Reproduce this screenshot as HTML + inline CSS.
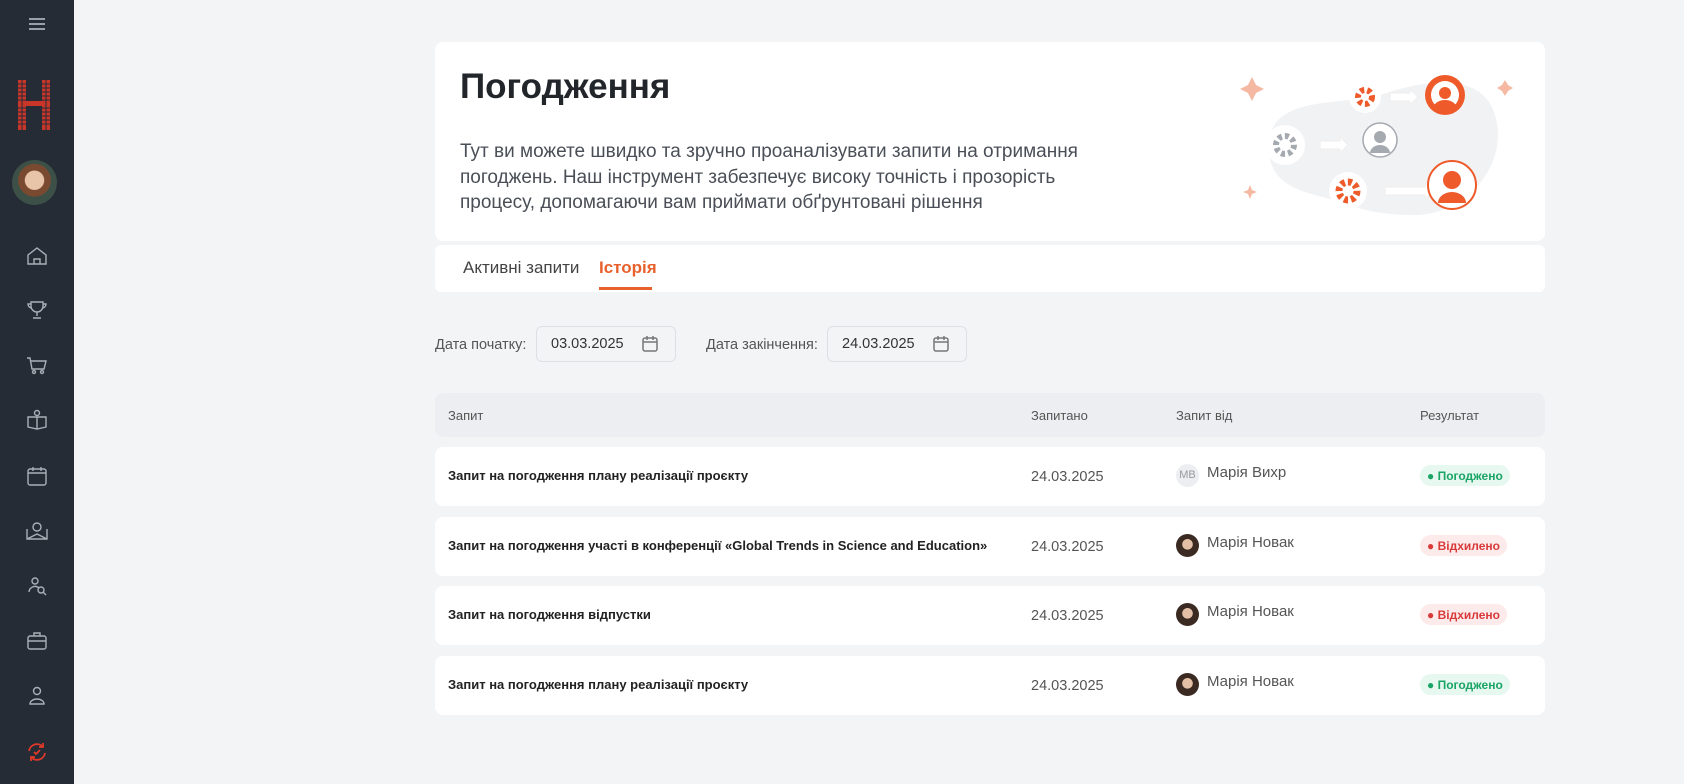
<!DOCTYPE html>
<html><head><meta charset="utf-8"><style>
*{box-sizing:border-box;margin:0;padding:0}
body{width:1684px;height:784px;background:#f3f4f6;font-family:"Liberation Sans",sans-serif;position:relative;overflow:hidden;color:#222}
.sb{position:absolute;left:0;top:0;width:74px;height:784px;background:#262c35}
.ic{position:absolute;left:23px;width:28px;height:28px}
.card{position:absolute;left:435px;top:42px;width:1110px;height:199px;background:#fff;border-radius:8px}
h1{position:absolute;left:460px;top:67px;font-size:35px;font-weight:bold;color:#22262b}
.desc{position:absolute;left:460px;top:139px;width:640px;font-size:19px;line-height:25.5px;color:#4a4f57}
.tabs{position:absolute;left:435px;top:245px;width:1110px;height:47px;background:#fff;border-radius:6px}
.tab{position:absolute;top:13px;font-size:17px;color:#444}
.lab{position:absolute;top:337px;font-size:14.5px;color:#555}
.date{position:absolute;top:326px;width:140px;height:36px;border:1px solid #dde0e4;border-radius:6px;font-size:14.5px;color:#333;padding:9px 0 0 14px}
.date svg{position:absolute;right:16px;top:8px}
.th{position:absolute;left:435px;top:393px;width:1110px;height:44px;background:#eceef1;border-radius:8px;font-size:13px;color:#555}
.th span,.row span{position:absolute}
.row{position:absolute;left:435px;width:1110px;height:59px;background:#fff;border-radius:8px;font-size:13px}
.t{left:13px;top:21px;font-weight:bold;color:#222}
.d{left:596px;top:22px;color:#555;font-size:14.5px}
.av{left:741px;top:17px;width:23px;height:23px;border-radius:50%;background:#6b5346;overflow:hidden}
.n{left:772px;top:17px;color:#555;font-size:15px}
.b{left:985px;top:18px;height:21px;border-radius:11px;font-size:12px;font-weight:bold;padding:4px 7px 0 7px}
.ok{background:#e6f8ef;color:#1aa466}.no{background:#fdeaea;color:#d83a3a}
</style></head><body>
<div class="sb">
<svg class="ic" style="top:10px" viewBox="0 0 28 28"><path d="M6 9h16M6 14h16M6 19h16" stroke="#aab0b8" stroke-width="1.8"/></svg>
<svg style="position:absolute;left:16px;top:78px" width="36" height="54" viewBox="0 0 36 54"><g fill="#c8362a"><rect x="2" y="2" width="8" height="50"/><rect x="26" y="2" width="8" height="50"/><rect x="10" y="23" width="16" height="5"/></g><g stroke="#262c35" stroke-width="1"><path d="M2 6h32M2 10h32M2 14h32M2 18h32M2 22h32M2 30h32M2 34h32M2 38h32M2 42h32M2 46h32M6 2v50M30 2v50"/></g></svg>
<div style="position:absolute;left:12px;top:160px;width:45px;height:45px;border-radius:50%;background:radial-gradient(circle at 50% 45%,#e8c4a8 0 28%,#7a4a30 30% 48%,#3c5048 50%);"></div>
<svg class="ic" style="top:242px" viewBox="0 0 28 28" fill="none" stroke="#aab0b8" stroke-width="1.4"><path d="M5 13l9-7 9 7v9H5zM11 22v-5h6v5"/></svg>
<svg class="ic" style="top:296px" viewBox="0 0 28 28" fill="none" stroke="#aab0b8" stroke-width="1.4"><path d="M8 6h12v4a6 6 0 01-12 0zM8 8H5a4 4 0 004 4M20 8h3a4 4 0 01-4 4M14 16v4M10 22h8"/></svg>
<svg class="ic" style="top:351px" viewBox="0 0 28 28" fill="none" stroke="#aab0b8" stroke-width="1.4"><path d="M4 7h3l2 11h12l2-8H8"/><circle cx="11" cy="21" r="1.5"/><circle cx="19" cy="21" r="1.5"/></svg>
<svg class="ic" style="top:406px" viewBox="0 0 28 28" fill="none" stroke="#aab0b8" stroke-width="1.4"><circle cx="14" cy="7" r="2.5"/><path d="M5 11h18v10l-9 2-9-2zM14 11v12"/></svg>
<svg class="ic" style="top:462px" viewBox="0 0 28 28" fill="none" stroke="#aab0b8" stroke-width="1.4"><rect x="5" y="7" width="18" height="16" rx="2"/><path d="M10 5v4M18 5v4M5 11h18"/></svg>
<svg class="ic" style="top:517px" viewBox="0 0 28 28" fill="none" stroke="#aab0b8" stroke-width="1.4"><path d="M4 12v10h20V12M4 22l10-5 10 5"/><circle cx="14" cy="10" r="4"/></svg>
<svg class="ic" style="top:572px" viewBox="0 0 28 28" fill="none" stroke="#aab0b8" stroke-width="1.4"><circle cx="12" cy="9" r="3"/><path d="M6 20a6 6 0 0110-4"/><circle cx="18" cy="18" r="3"/><path d="M20 20l3 3"/></svg>
<svg class="ic" style="top:627px" viewBox="0 0 28 28" fill="none" stroke="#aab0b8" stroke-width="1.4"><rect x="5" y="9" width="18" height="13" rx="2"/><path d="M11 9V6h6v3M5 14h18"/></svg>
<svg class="ic" style="top:682px" viewBox="0 0 28 28" fill="none" stroke="#aab0b8" stroke-width="1.4"><circle cx="14" cy="9" r="3.5"/><path d="M7 22a7 5 0 0114 0z"/></svg>
<svg class="ic" style="top:738px" viewBox="0 0 28 28" fill="none" stroke="#e0392a" stroke-width="1.8"><path d="M6 13a8 8 0 0114-4M22 15a8 8 0 01-14 4M20 5v4h-4M8 23v-4h4M11 14l2 2 4-4"/></svg>
</div>
<div class="card"></div>
<h1>Погодження</h1>
<div class="desc">Тут ви можете швидко та зручно проаналізувати запити на отримання погоджень. Наш інструмент забезпечує високу точність і прозорість процесу, допомагаючи вам приймати обґрунтовані рішення</div>
<svg style="position:absolute;left:1240px;top:65px" width="280" height="160" viewBox="0 0 280 160">
<path d="M30 70c10-40 80-30 110-40s100-30 115 20-30 100-80 100-60-10-100-20-50-30-45-60z" fill="#f1f2f4"/>
<path d="M12 12l4 8 8 4-8 4-4 8-4-8-8-4 8-4z" fill="#f5b8a3"/><path d="M265 15l3 5 5 3-5 3-3 5-3-5-5-3 5-3z" fill="#f5b8a3"/><path d="M10 120l2 5 5 2-5 2-2 5-2-5-5-2 5-2z" fill="#f5b8a3"/>
<circle cx="45" cy="80" r="20" fill="#fff"/><circle cx="45" cy="80" r="9" fill="none" stroke="#a5a9b0" stroke-width="6" stroke-dasharray="4 3"/>
<circle cx="125" cy="32" r="16" fill="#fff"/><circle cx="125" cy="32" r="7" fill="none" stroke="#ee5a2a" stroke-width="6" stroke-dasharray="4 3"/>
<circle cx="108" cy="126" r="19" fill="#fff"/><circle cx="108" cy="126" r="9" fill="none" stroke="#ee5a2a" stroke-width="7" stroke-dasharray="4 3"/>
<path d="M80 76h20v-4l8 8-8 8v-4H80zM150 28h20v-4l8 8-8 8v-4h-20zM145 122h40v-4l8 8-8 8v-4h-40z" fill="#fff" stroke="#eee"/>
<circle cx="140" cy="75" r="17" fill="#fff" stroke="#a5a9b0" stroke-width="1.5"/><circle cx="140" cy="72" r="6" fill="#a5a9b0"/><path d="M130 88a10 8 0 0120 0z" fill="#a5a9b0"/>
<circle cx="205" cy="30" r="20" fill="#ee5a2a"/><circle cx="205" cy="30" r="14" fill="#fff"/><circle cx="205" cy="28" r="6" fill="#ee5a2a"/><path d="M193 44a12 9 0 0124 0z" fill="#ee5a2a"/>
<circle cx="212" cy="120" r="24" fill="#fff" stroke="#ee5a2a" stroke-width="2"/><circle cx="212" cy="115" r="9" fill="#ee5a2a"/><path d="M198 138a14 11 0 0128 0z" fill="#ee5a2a"/>
</svg>
<div class="tabs"><div class="tab" style="left:28px">Активні запити</div><div class="tab" style="left:164px;color:#e8612c;font-weight:bold">Історія</div><div style="position:absolute;left:164px;top:42px;width:53px;height:3px;background:#e8612c"></div></div>
<div class="lab" style="left:435px">Дата початку:</div>
<div class="date" style="left:536px">03.03.2025<svg width="18" height="18" viewBox="0 0 18 18" fill="none" stroke="#777" stroke-width="1.5"><rect x="2" y="3" width="14" height="13" rx="2"/><path d="M2 7h14M6 1v4M12 1v4"/></svg></div>
<div class="lab" style="left:706px">Дата закінчення:</div>
<div class="date" style="left:827px">24.03.2025<svg width="18" height="18" viewBox="0 0 18 18" fill="none" stroke="#777" stroke-width="1.5"><rect x="2" y="3" width="14" height="13" rx="2"/><path d="M2 7h14M6 1v4M12 1v4"/></svg></div>
<div class="th"><span style="left:13px;top:15px">Запит</span><span style="left:596px;top:15px">Запитано</span><span style="left:741px;top:15px">Запит від</span><span style="left:985px;top:15px">Результат</span></div>
<div class="row" style="top:447px"><span class="t">Запит на погодження плану реалізації проєкту</span><span class="d">24.03.2025</span><span class="av" style="background:#eceef1;color:#999;font-size:11px;text-align:center;line-height:23px">МВ</span><span class="n">Марія Вихр</span><span class="b ok">● Погоджено</span></div>
<div class="row" style="top:517px"><span class="t">Запит на погодження участі в конференції «Global Trends in Science and Education»</span><span class="d">24.03.2025</span><span class="av" style="background:radial-gradient(circle at 50% 45%,#e3c0a5 0 30%,#3a2a22 32%)"></span><span class="n">Марія Новак</span><span class="b no">● Відхилено</span></div>
<div class="row" style="top:586px"><span class="t">Запит на погодження відпустки</span><span class="d">24.03.2025</span><span class="av" style="background:radial-gradient(circle at 50% 45%,#e3c0a5 0 30%,#3a2a22 32%)"></span><span class="n">Марія Новак</span><span class="b no">● Відхилено</span></div>
<div class="row" style="top:656px"><span class="t">Запит на погодження плану реалізації проєкту</span><span class="d">24.03.2025</span><span class="av" style="background:radial-gradient(circle at 50% 45%,#e3c0a5 0 30%,#3a2a22 32%)"></span><span class="n">Марія Новак</span><span class="b ok">● Погоджено</span></div>
</body></html>
